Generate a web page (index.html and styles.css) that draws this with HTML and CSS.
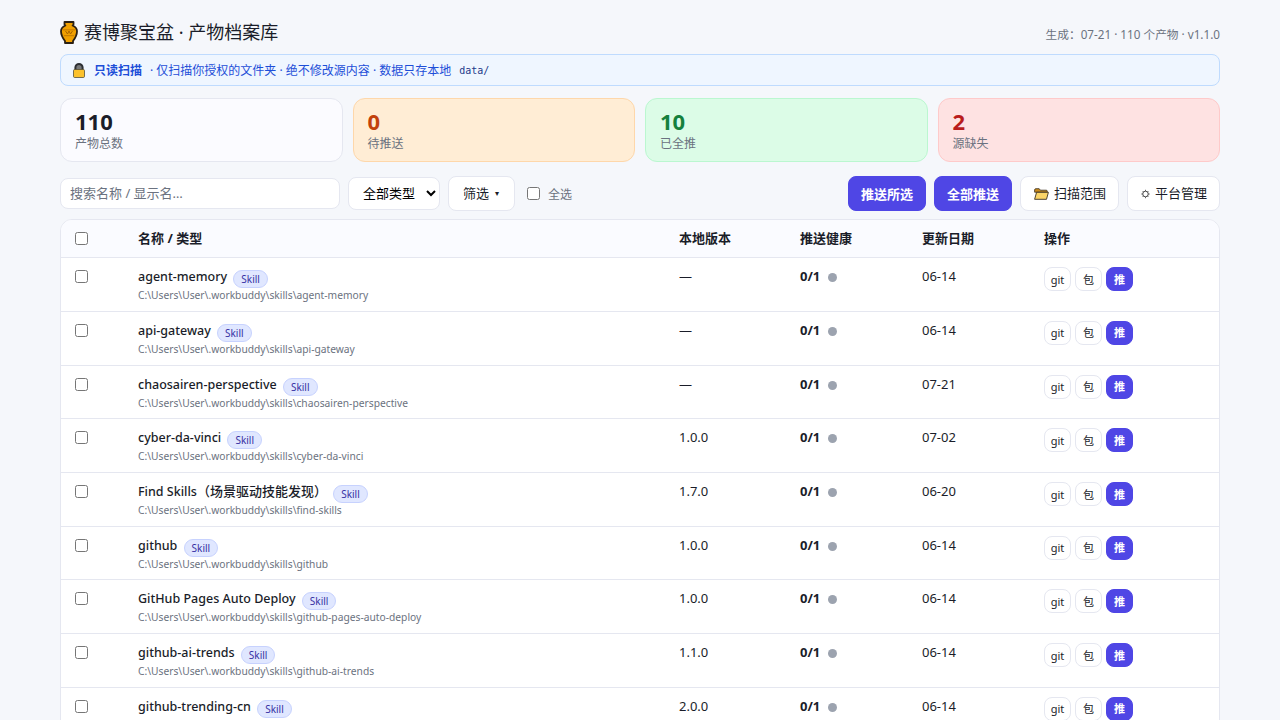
FILE: index.html
```html
<!DOCTYPE html>
<html lang="zh-CN">
<head>
  <meta charset="UTF-8" />
  <title>赛博聚宝盆 · 产物档案库</title>
  <link rel="stylesheet" href="styles.css">
</head>
<body>
  <div class="page">
    <!-- Header -->
    <header class="top">
      <h1>
        <svg class="logo" width="18" height="23" viewBox="0 0 18 23">
          <path d="M4.500 1h9v2.500l-.9 1c2.700 1.200 4.400 3 4.400 5.800 0 4-2.400 7.700-4 9.700v2H5v-2C3.400 18 1 14.300 1 10.300c0-2.800 1.700-4.600 4.400-5.800l-.9-1z" fill="#f0a000" stroke="#2a2014" stroke-width="1.800" stroke-linejoin="round"/>
          <path d="M3 8.800h12M3.800 14.600h10.400" stroke="#c97f00" stroke-width="1.200"/>
          <path d="M5.500 10l2 3 1.500-3 1.500 3 2-3" fill="none" stroke="#a86400" stroke-width="1"/>
        </svg>
        赛博聚宝盆 · 产物档案库
      </h1>
      <div class="meta">生成：07-21 · 110 个产物 · v1.1.0</div>
    </header>

    <!-- Read only notice -->
    <div class="notice">
      <svg class="lock" width="12" height="15" viewBox="0 0 12 15">
        <path d="M2.400 7.500V4.600a3.600 3.600 0 0 1 7.200 0v2.900" fill="#77797a" stroke="#2c2f33" stroke-width="2"/>
        <rect x=".5" y="6.500" width="11" height="8" rx="1.200" fill="#fcc22c" stroke="#55503a" stroke-width=".8"/>
      </svg>
      <strong>只读扫描</strong>
      <span>· 仅扫描你授权的文件夹 · 绝不修改源内容 · 数据只存本地</span>
      <code>data/</code>
    </div>

    <!-- Stats -->
    <div class="stats">
      <div class="stat"><div class="num">110</div><div class="lbl">产物总数</div></div>
      <div class="stat pending"><div class="num">0</div><div class="lbl">待推送</div></div>
      <div class="stat done"><div class="num">10</div><div class="lbl">已全推</div></div>
      <div class="stat missing"><div class="num">2</div><div class="lbl">源缺失</div></div>
    </div>

    <!-- Toolbar -->
    <div class="toolbar">
      <input class="search" type="text" placeholder="搜索名称 / 显示名…" />
      <select class="type-select"><option>全部类型</option></select>
      <button class="btn filter-btn">筛选 <span class="caret">▾</span></button>
      <label class="check-all"><input type="checkbox" /> 全选</label>
      <div class="spacer"></div>
      <button class="btn primary">推送所选</button>
      <button class="btn primary">全部推送</button>
      <button class="btn">
        <svg class="ico" width="15" height="12" viewBox="0 0 15 12">
          <path d="M.6 2c0-.8.5-1.300 1.200-1.300h3.400l1.200 1.500h5.800c.7 0 1.100.4 1.100 1v1H.6z" fill="#c98a1b" stroke="#3a3020" stroke-width=".8"/>
          <path d="M.6 11.300 2.600 4.300h11.800l-1.900 7z" fill="#fbd568" stroke="#3a3020" stroke-width=".9" stroke-linejoin="round"/>
        </svg>
        扫描范围
      </button>
      <button class="btn">
        <svg class="ico" width="9" height="10" viewBox="0 0 10 10">
          <circle cx="5" cy="5" r="3.100" fill="none" stroke="#333" stroke-width="1"/>
          <path d="M5 .3v1.400M5 8.300v1.400M.3 5h1.400M8.300 5h1.400M1.700 1.700l1 1M7.300 7.300l1 1M8.300 1.700l-1 1M2.700 7.300l-1 1" stroke="#333" stroke-width=".8"/>
        </svg>
        平台管理
      </button>
    </div>

    <!-- Artifact table -->
    <div class="table-wrap">
      <table>
        <thead>
          <tr>
            <th class="c-check"><input type="checkbox" /></th>
            <th class="c-name">名称 / 类型</th>
            <th class="c-ver">本地版本</th>
            <th class="c-health">推送健康</th>
            <th class="c-date">更新日期</th>
            <th>操作</th>
          </tr>
        </thead>
        <tbody>
          <tr>
            <td><input type="checkbox" /></td>
            <td><div class="name">agent-memory <span class="tag">Skill</span></div><div class="path">C:\Users\User\.workbuddy\skills\agent-memory</div></td>
            <td>—</td>
            <td><b>0/1</b><i class="dot"></i></td>
            <td>06-14</td>
            <td><div class="ops"><button class="mini">git</button><button class="mini">包</button><button class="mini push">推</button></div></td>
          </tr>
          <tr>
            <td><input type="checkbox" /></td>
            <td><div class="name">api-gateway <span class="tag">Skill</span></div><div class="path">C:\Users\User\.workbuddy\skills\api-gateway</div></td>
            <td>—</td>
            <td><b>0/1</b><i class="dot"></i></td>
            <td>06-14</td>
            <td><div class="ops"><button class="mini">git</button><button class="mini">包</button><button class="mini push">推</button></div></td>
          </tr>
          <tr>
            <td><input type="checkbox" /></td>
            <td><div class="name">chaosairen-perspective <span class="tag">Skill</span></div><div class="path">C:\Users\User\.workbuddy\skills\chaosairen-perspective</div></td>
            <td>—</td>
            <td><b>0/1</b><i class="dot"></i></td>
            <td>07-21</td>
            <td><div class="ops"><button class="mini">git</button><button class="mini">包</button><button class="mini push">推</button></div></td>
          </tr>
          <tr>
            <td><input type="checkbox" /></td>
            <td><div class="name">cyber-da-vinci <span class="tag">Skill</span></div><div class="path">C:\Users\User\.workbuddy\skills\cyber-da-vinci</div></td>
            <td>1.0.0</td>
            <td><b>0/1</b><i class="dot"></i></td>
            <td>07-02</td>
            <td><div class="ops"><button class="mini">git</button><button class="mini">包</button><button class="mini push">推</button></div></td>
          </tr>
          <tr>
            <td><input type="checkbox" /></td>
            <td><div class="name">Find Skills<span class="zh">（场景驱动技能发现）</span> <span class="tag">Skill</span></div><div class="path">C:\Users\User\.workbuddy\skills\find-skills</div></td>
            <td>1.7.0</td>
            <td><b>0/1</b><i class="dot"></i></td>
            <td>06-20</td>
            <td><div class="ops"><button class="mini">git</button><button class="mini">包</button><button class="mini push">推</button></div></td>
          </tr>
          <tr>
            <td><input type="checkbox" /></td>
            <td><div class="name">github <span class="tag">Skill</span></div><div class="path">C:\Users\User\.workbuddy\skills\github</div></td>
            <td>1.0.0</td>
            <td><b>0/1</b><i class="dot"></i></td>
            <td>06-14</td>
            <td><div class="ops"><button class="mini">git</button><button class="mini">包</button><button class="mini push">推</button></div></td>
          </tr>
          <tr>
            <td><input type="checkbox" /></td>
            <td><div class="name">GitHub Pages Auto Deploy <span class="tag">Skill</span></div><div class="path">C:\Users\User\.workbuddy\skills\github-pages-auto-deploy</div></td>
            <td>1.0.0</td>
            <td><b>0/1</b><i class="dot"></i></td>
            <td>06-14</td>
            <td><div class="ops"><button class="mini">git</button><button class="mini">包</button><button class="mini push">推</button></div></td>
          </tr>
          <tr>
            <td><input type="checkbox" /></td>
            <td><div class="name">github-ai-trends <span class="tag">Skill</span></div><div class="path">C:\Users\User\.workbuddy\skills\github-ai-trends</div></td>
            <td>1.1.0</td>
            <td><b>0/1</b><i class="dot"></i></td>
            <td>06-14</td>
            <td><div class="ops"><button class="mini">git</button><button class="mini">包</button><button class="mini push">推</button></div></td>
          </tr>
          <tr>
            <td><input type="checkbox" /></td>
            <td><div class="name">github-trending-cn <span class="tag">Skill</span></div><div class="path">C:\Users\User\.workbuddy\skills\github-trending-cn</div></td>
            <td>2.0.0</td>
            <td><b>0/1</b><i class="dot"></i></td>
            <td>06-14</td>
            <td><div class="ops"><button class="mini">git</button><button class="mini">包</button><button class="mini push">推</button></div></td>
          </tr>
        </tbody>
      </table>
    </div>
  </div>
</body>
</html>
```

FILE: styles.css
```css
/* General */
* {
  box-sizing: border-box;
}

html, body {
  height: 720px;
  overflow: hidden;
}

body {
  margin: 0;
  background-color: #f5f7fb;
  color: #1a1d29;
  font-family: "Noto Sans", "Noto Sans CJK SC", sans-serif;
  font-size: 13px;
}

.page {
  width: 1160px;
  margin: 0 auto;
  padding-top: 20px;
}

/* Header */
.top {
  display: flex;
  justify-content: space-between;
  align-items: flex-end;
  height: 24px;
  margin-bottom: 10px;
}

h1 {
  display: flex;
  align-items: center;
  gap: 6px;
  margin: 0;
  font-size: 18px;
  font-weight: 400;
  line-height: 24px;
}

.meta {
  color: #6b7280;
  font-size: 11.700px;
  line-height: 20px;
}

/* Notice */
.notice {
  display: flex;
  align-items: center;
  height: 32px;
  padding: 0 12px;
  margin-bottom: 12px;
  background-color: #eff6ff;
  border: 1px solid #bfdbfe;
  border-radius: 8px;
  color: #1d4ed8;
  font-size: 12px;
}

.notice .lock {
  margin-top: 1px;
  margin-right: 9px;
}

.notice strong {
  margin-right: 8px;
  font-weight: 700;
}

.notice code {
  margin-left: 8px;
  color: #1e3a8a;
  font-family: "DejaVu Sans Mono", monospace;
  font-size: 10px;
}

/* Stats */
.stats {
  display: grid;
  grid-template-columns: repeat(4, 1fr);
  gap: 10px;
  margin-bottom: 14px;
}

.stat {
  height: 64px;
  padding: 8px 14px;
  background-color: #fbfbff;
  border: 1px solid #e5e7f0;
  border-radius: 12px;
}

.stat .num {
  font-size: 22px;
  font-weight: 700;
  line-height: 28px;
}

.stat .lbl {
  margin-top: 1px;
  color: #6b7280;
  font-size: 12px;
  line-height: 16px;
}

.stat.pending { background-color: #ffedd5; border-color: #fed7aa; }
.stat.pending .num { color: #c2410c; }
.stat.done { background-color: #dcfce7; border-color: #bbf7d0; }
.stat.done .num { color: #15803d; }
.stat.missing { background-color: #fee2e2; border-color: #fecaca; }
.stat.missing .num { color: #b91c1c; }

/* Toolbar */
.toolbar {
  display: flex;
  align-items: center;
  gap: 8px;
  height: 35px;
  margin-bottom: 8px;
}

.search {
  width: 280px;
  height: 31px;
  padding: 0 9px 2px;
  background: #fff;
  border: 1px solid #e5e7f0;
  border-radius: 8px;
  font: inherit;
}

.search::placeholder {
  color: #6b7280;
}

.type-select {
  width: 92px;
  height: 33px;
  padding: 0 0 2px 10px;
  background: #fff;
  border: 1px solid #e5e7f0;
  border-radius: 8px;
  color: #000;
  font: inherit;
}

.btn {
  display: inline-flex;
  align-items: center;
  justify-content: center;
  gap: 5px;
  height: 35px;
  padding: 0 12px 2px 13px;
  background: #fff;
  border: 1px solid #e5e7f0;
  border-radius: 8px;
  color: #1a1d29;
  font: inherit;
}

.btn.primary {
  padding: 0 12px 1px;
  background-color: #4f46e5;
  border-color: #4f46e5;
  color: #fff;
  font-weight: 700;
}

.btn .ico {
  margin-top: 2px;
}

.filter-btn {
  gap: 6px;
  padding: 0 14px 2px 13px;
  width: 67px;
}

.caret {
  font-size: 8px;
}

.check-all {
  display: flex;
  align-items: center;
  gap: 8px;
  margin-left: 4px;
  color: #6b7280;
  font-size: 12px;
}

.check-all input,
table input {
  width: 13px;
  height: 13px;
  margin: 0;
}

.spacer {
  flex: 1;
}

/* Table */
.table-wrap {
  background: #fff;
  border: 1px solid #e5e7f0;
  border-radius: 12px;
  overflow: hidden;
}

table {
  width: 100%;
  border-collapse: collapse;
  table-layout: fixed;
}

th {
  height: 37.750px;
  padding: 0 14px 3px;
  background-color: #fafbff;
  border-bottom: 1px solid #e5e7f0;
  font-size: 13px;
  font-weight: 700;
  text-align: left;
}

th input {
  display: block;
  margin-top: 3px;
}

td {
  height: 53.700px;
  padding: 10px 14px 0;
  border-bottom: 1px solid #e5e7f0;
  font-size: 13px;
  line-height: 17px;
  vertical-align: top;
}

.c-check { width: 63px; }
.c-name { width: 541px; }
.c-ver { width: 121px; }
.c-health { width: 122px; }
.c-date { width: 122px; }

td input {
  display: block;
  margin-top: 2px;
}

.name {
  height: 17px;
  font-size: 12.500px;
  font-weight: 500;
  white-space: nowrap;
}

.zh {
  font-size: 13px;
}

.tag {
  display: inline-block;
  height: 18px;
  margin-left: 3px;
  padding: 0 7px;
  background-color: #e0e7ff;
  border: 1px solid #c7d2fe;
  border-radius: 9px;
  color: #3730a3;
  font-size: 10px;
  font-weight: 400;
  line-height: 16px;
  vertical-align: -2px;
}

.path {
  margin-top: 3px;
  color: #6b7280;
  font-size: 10.250px;
  line-height: 14px;
}

.dot {
  display: inline-block;
  width: 9px;
  height: 9px;
  margin-left: 8px;
  background-color: #9ca3af;
  border-radius: 50%;
  vertical-align: -1px;
}

.ops {
  display: flex;
  gap: 4px;
  margin-top: -1px;
}

.mini {
  width: 27px;
  height: 24px;
  padding: 0;
  background: #fff;
  border: 1px solid #e5e7f0;
  border-radius: 8px;
  color: #1a1d29;
  font: inherit;
  font-size: 11px;
}

.mini.push {
  background-color: #4f46e5;
  border-color: #4f46e5;
  color: #fff;
  font-weight: 700;
}
```
